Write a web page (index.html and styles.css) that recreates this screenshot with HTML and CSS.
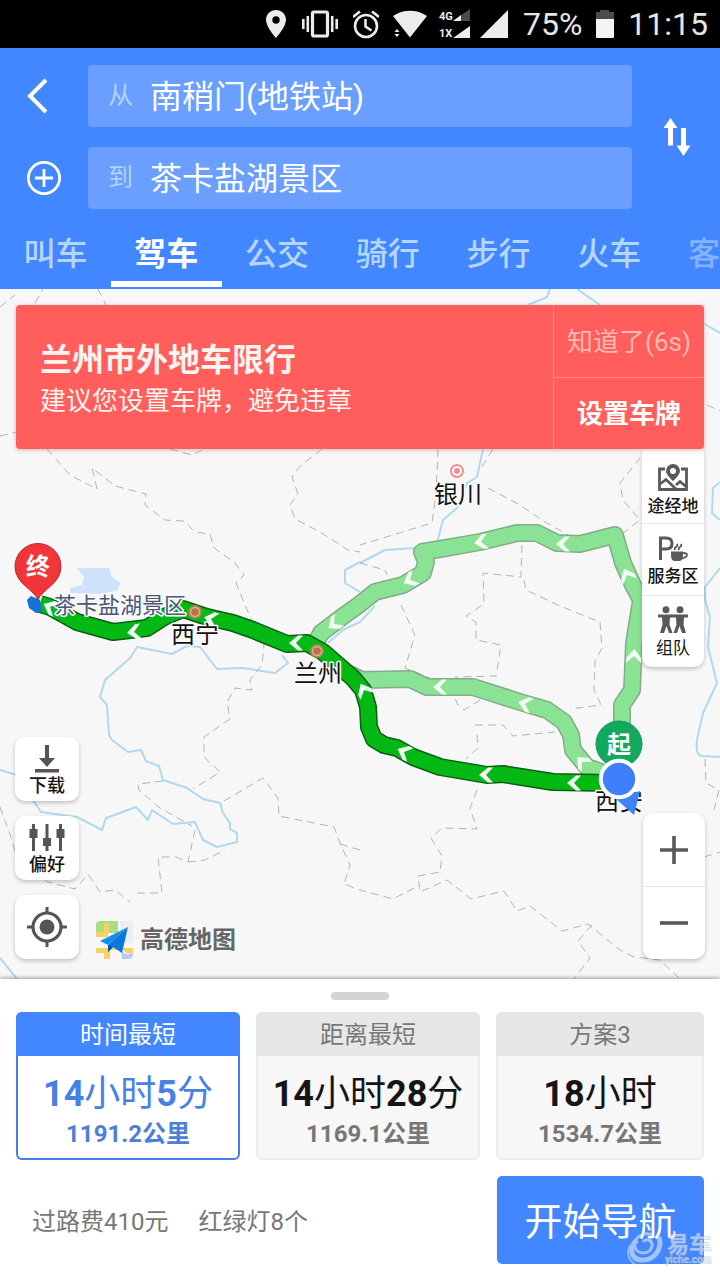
FILE: index.html
```html
<!DOCTYPE html>
<html lang="zh-CN">
<head>
<meta charset="utf-8">
<meta name="viewport" content="width=device-width, initial-scale=1">
<title>高德地图 - 驾车路线</title>
<link rel="stylesheet" href="styles.css">
</head>
<body>
<div class="status">
  <svg width="22" height="30" viewBox="0 0 22 30" fill="#ececec"><path fill-rule="evenodd" d="M11 1C5.500 1 1 5.300 1 10.800C1 18 11 29 11 29S21 18 21 10.800C21 5.300 16.500 1 11 1ZM11 7.300a3.700 3.700 0 1 1 0 7.400a3.700 3.700 0 1 1 0-7.400Z"/></svg>
  <svg width="38" height="30" viewBox="0 0 38 30" fill="none" stroke="#ececec"><rect x="11.500" y="3" width="15" height="24" rx="1.500" stroke-width="3.200"/><path stroke-width="2.600" d="M6.800 7v16M31.200 7v16M2.300 10v10M35.700 10v10"/></svg>
  <svg width="26" height="30" viewBox="0 0 26 30" fill="none" stroke="#ececec" stroke-width="2.600"><circle cx="13" cy="17" r="11"/><path d="M12.500 10v7.500l6 4M0 8l7-5.500M26 8l-7-5.500"/></svg>
  <svg class="wifi" width="32" height="30" viewBox="0 0 32 30" fill="#ececec"><path d="M0 7C10 0 24 0 34 7L17 28.500Z"/><path d="M4 20l2.500 3h-5zM4 28l2.500-3h-5z"/></svg>
  <svg class="signal" width="70" height="30" viewBox="0 0 70 30" fill="#ececec"><text x="0" y="11">4G</text><text x="0" y="28">1X</text><path fill="#4b4b4b" d="M31 0v12H14z"/><path d="M22 6v6h-8zM31 17v12H14zM69 1v28H41z"/></svg>
  <span>75%</span>
  <svg width="18" height="30" viewBox="0 0 18 30"><path fill="#4b4b4b" d="M4 1h9v2h5v8H0V3h4z"/><path fill="#f4f4f4" d="M0 10h18v18q0 1-1 1H1q-1 0-1-1z"/></svg>
  <span>11:15</span>
</div>

<header class="header">
  <form class="search">
    <button class="icon-btn" type="button" aria-label="返回"><svg width="34" height="38" viewBox="0 0 34 38" fill="none" stroke="#fff" stroke-width="4"><path d="M20 3L4 19l16 16"/></svg></button>
    <div class="field"><label for="from">从</label><input id="from" type="text" value="南稍门(地铁站)"></div>
    <button class="swap" type="button" aria-label="交换起终点"><svg width="28" height="38" viewBox="0 0 28 38" fill="#fff"><path d="M7.500 0L14.500 10H10v17.500H5V10H.5zM18 10h5v17.500h4.500L20.500 38L13.500 27.500H18z"/></svg></button>
    <button class="icon-btn" type="button" aria-label="添加途经点"><svg width="36" height="36" viewBox="0 0 36 36" fill="none" stroke="#fff" stroke-width="2.800"><circle cx="18" cy="18" r="15.600"/><path d="M18 9v18M9 18h18"/></svg></button>
    <div class="field"><label for="to">到</label><input id="to" type="text" value="茶卡盐湖景区"></div>
  </form>
  <nav class="tabs">
    <a href="#call">叫车</a><a href="#drive" class="active" aria-current="page">驾车</a><a href="#bus">公交</a><a href="#ride">骑行</a><a href="#walk">步行</a><a href="#train">火车</a><a href="#coach" class="faded">客车</a>
  </nav>
</header>

<main class="map">
  <svg class="canvas" viewBox="0 289 720 690" preserveAspectRatio="xMidYMid slice">
    <defs>
      <path id="chev" d="M7 -7.500L2 -7.500L-7 0L2 7.500L7 7.500L0 0Z"/>
      <g id="city"><circle r="7" fill="#a98552"/><circle r="5.200" fill="#d9b488"/><circle r="3.800" fill="#b5744c"/></g>
    </defs>
    <path class="lake" d="M77 568H109L112 577L120 582L118 590L100 594L70 593V588L82 585L84 577Z"/>
    <g class="river">
      <path d="M360 562L345 570V583L360 592M375 606L360 622L343 630L328 643M282 655L288 663L275 673L243 668L217 669L200 647L187 646L172 654L137 647L130 658L105 680L100 697L107 705L109 735L112 740L128 752L141 750L146 761L159 766L163 780L187 788L203 799L220 803L223 813L230 823V829L237 833V842L217 847L203 840L195 822L173 824L152 810L148 820L136 807L106 818L102 830L77 817L41 812L33 800L30 779L0 770"/>
      <path d="M0 958L17 979M720 568L705 587V600L710 617L708 647L717 683L703 713L697 740Q695 755 702 756L720 757M720 482L713 488L712 513L720 520M528 305L547 297L550 289M577 289L600 305M703 323L720 333M483 449L477 477L467 483L457 508L443 520L437 543L415 548L385 550L360 563"/>
    </g>
    <g class="border">
      <path d="M0 307L15 295M35 303L43 289M98 289L106 305M0 436L17 432M47 449L70 475L97 489L92 468L115 486L146 494L145 505L165 520L184 521L195 532L210 534L214 548L235 563L244 575L236 583L248 612L264 645L262 665L250 680L252 690L235 688L227 702L230 719L204 737V757L220 772L193 789"/>
      <path d="M322 449L300 466L292 477L298 494L290 505L295 519L320 532L348 550L360 552M170 449L192 455L202 450M438 449L436 495L432 523L360 545M493 449L480 470M488 488L520 505L545 522L568 535M622 534L640 520L623 500L620 483L640 458M522 545L521 577L483 573L484 604L466 616L476 622V640L501 645L496 676L455 677M524 580L526 590L560 606L600 622L602 648L595 661L594 690L601 705L570 709M401 605L415 635L405 668L430 678M450 687L458 705L464 710L480 700M475 725H503L513 736L555 732M477 735L478 748L466 759M477 790L470 808L477 829L442 828L431 838L442 856L440 872L418 876L420 892L447 880L471 899L504 891L517 911L530 906L562 931L588 924L620 950L634 957L660 960L680 979"/>
      <path d="M360 563L385 570L387 575M0 807L10 834L17 858L24 870L48 882L75 889L88 874L100 892L115 890L130 902M137 893H162L158 857H176L188 862L195 830M188 862L205 860L225 850M224 801L263 778L278 798L279 816L334 827L340 843L350 865L344 884L360 890L393 899L420 885M340 844L360 850M592 925L578 941L590 958L574 979M705 759L706 783L719 790L714 810M704 857L720 852M707 405L720 411M163 781L138 784L139 790L160 808L192 826"/>
    </g>
    <g class="route alt">
      <path d="M313 648L321 633L342 617L360 604L375 592L403 585L423 573L426 562L422 552L440 549L480 542L517 533L537 533L557 543L580 544L615 535L623 563L633 585L641 600L634 643L633 667L632 690L622 705V740"/>
      <path d="M345 672L362 680L410 679L427 687L473 687L520 702L547 710L564 722L571 735L573 750L587 767L610 775"/>
    </g>
    <g class="route alt core">
      <path d="M313 648L321 633L342 617L360 604L375 592L403 585L423 573L426 562L422 552L440 549L480 542L517 533L537 533L557 543L580 544L615 535L623 563L633 585L641 600L634 643L633 667L632 690L622 705V740"/>
      <path d="M345 672L362 680L410 679L427 687L473 687L520 702L547 710L564 722L571 735L573 750L587 767L610 775"/>
    </g>
    <path class="route main" d="M40 604L50 607L77 622L113 632L147 628L164 617L183 609L207 617L233 623L253 630L287 644L307 643L323 652L353 678L363 690L368 707L369 727L374 739L384 745L397 748L413 757L440 767L487 775L503 774L553 782L612 783"/>
    <path class="route main core" d="M40 604L50 607L77 622L113 632L147 628L164 617L183 609L207 617L233 623L253 630L287 644L307 643L323 652L353 678L363 690L368 707L369 727L374 739L384 745L397 748L413 757L440 767L487 775L503 774L553 782L612 783"/>
    <path fill="#1673d6" d="M27 600L31 596L40 600L42 612L36 613L29 608Z"/>
    <g fill="#f3fff3">
      <use href="#chev" transform="translate(50 607) rotate(25)"/><use href="#chev" transform="translate(134 632) rotate(-8)"/><use href="#chev" transform="translate(211 619) rotate(14)"/><use href="#chev" transform="translate(296 643)"/><use href="#chev" transform="translate(334 624) rotate(-38)"/>
      <use href="#chev" transform="translate(410 580) rotate(-28)"/><use href="#chev" transform="translate(481 542) rotate(-10)"/><use href="#chev" transform="translate(563 544)"/><use href="#chev" transform="translate(627 575) rotate(65)"/><use href="#chev" transform="translate(634 656) rotate(92)"/>
      <use href="#chev" transform="translate(440 687)"/><use href="#chev" transform="translate(525 704) rotate(16)"/><use href="#chev" transform="translate(364 690) rotate(62)"/><use href="#chev" transform="translate(582 762) rotate(45)"/><use href="#chev" transform="translate(404 752) rotate(25)"/><use href="#chev" transform="translate(486 775)"/><use href="#chev" transform="translate(574 783)"/>
    </g>
    <use href="#city" x="195" y="612"/><use href="#city" x="317" y="651"/>
    <circle cx="457" cy="471" r="6" fill="#fff" stroke="#ee8f91" stroke-width="2"/><circle cx="457" cy="471" r="3" fill="#ee8f91"/>
    <g class="names">
      <text x="458" y="503">银川</text><text x="195" y="643">西宁</text><text x="318" y="682">兰州</text><text x="619" y="810">西安</text>
      <text class="poi" x="120" y="613">茶卡盐湖景区</text>
    </g>
    <path fill="#f33438" stroke="#a92c32" d="M38 600C35 590 15 584 15 566.500A23 23 0 0 1 61 566.500C61 584 41 590 38 600Z"/>
    <text class="pin" x="38" y="575">终</text>
    <circle cx="619" cy="744" r="23" fill="#12a860" stroke="#0c9b58"/>
    <text class="pin" x="619" y="753">起</text>
    <path fill="#3f83fb" d="M615 798L640 791L634 815Z"/>
    <circle cx="619" cy="779" r="18.200" fill="#3f7ffb" stroke="#fff" stroke-width="4"/>
  </svg>

  <section class="banner">
    <div class="banner-text"><h2>兰州市外地车限行</h2><p>建议您设置车牌，避免违章</p></div>
    <div class="banner-actions"><button type="button">知道了(6s)</button><button class="strong" type="button">设置车牌</button></div>
  </section>

  <div class="panel tools">
    <button type="button"><svg width="30" height="28" viewBox="0 0 30 28" fill="none" stroke="#595959" stroke-width="2.800"><path d="M7 5H1.500v20.500h27V5H23M2 20l6-4.500L18 25M18 21l4-3.500 6 5"/><path fill="#595959" fill-rule="evenodd" stroke="none" d="M15 0a7 7 0 0 1 7 7c0 4-7 10-7 10S8 11 8 7a7 7 0 0 1 7-7Zm0 4a3 3 0 1 0 0 6a3 3 0 1 0 0-6Z"/></svg>途经地</button>
    <button type="button"><svg width="30" height="28" viewBox="0 0 30 28" fill="none" stroke="#595959" stroke-width="3"><path d="M2.500 26V4H8q6 0 6 5.500T8 15H3"/><path fill="#595959" stroke="none" d="M13 17.500H25V21q0 6-4 6h-4q-4 0-4-6z"/><path stroke-width="1.800" d="M25 19q4 0 4 2t-5 3.500M17 16q-1-2 1-3t1-3M21 16q-1-2 1-3t1-3"/></svg>服务区</button>
    <button type="button"><svg width="32" height="28" viewBox="0 0 32 28" fill="#595959"><circle cx="9" cy="3.700" r="3.500"/><circle cx="23" cy="3.700" r="3.500"/><path d="M1 8.500h30v3h-4l-.5 7L29 27h-4l-2.500-7L20 27h-3.500l3-8.500-.5-7h-6l-.5 7 3 8.500H12l-2.500-7L7 27H3l2.500-8.500-.5-7H1z"/></svg>组队</button>
  </div>

  <div class="left">
    <button class="panel" type="button"><svg width="28" height="30" viewBox="0 0 28 30" fill="#555"><path d="M12 1h4v13h6l-8 9-8-9h6zM2 25h24v3.500H2z"/></svg>下载</button>
    <button class="panel" type="button"><svg width="38" height="30" viewBox="0 0 38 30" fill="#555"><path d="M4 1h3v5h2.500v9H7v13H4V15H1.500V6H4zM17.500 1h3v14H23v8h-2.500v5h-3v-5H15v-8h2.500zM31 1h3v5h2.500v9H34v13h-3V15h-2.500V6H31z"/></svg>偏好</button>
    <button class="panel locate" type="button" aria-label="定位"><svg width="40" height="40" viewBox="0 0 40 40" fill="none" stroke="#555"><circle cx="20" cy="20" r="14" stroke-width="3.200"/><circle cx="20" cy="20" r="7.500" fill="#555" stroke="none"/><path stroke-width="3" d="M20 0v7M20 33v7M0 20h7M33 20h7"/></svg></button>
  </div>

  <div class="brand">
    <svg width="38" height="38" viewBox="0 0 38 38"><path fill="#a8df82" d="M4 0h18v12H0V4q0-4 4-4z"/><path fill="#eceff1" d="M24 0h9q4 0 4 4v18H24z"/><path fill="#f8d064" d="M8 2h5v10H8zM0 11h12v5H0zM0 27h37v6q-7 0-10-4H14v9H8v-6H0z"/><path fill="#b6caf2" d="M26 31q6 4 11 1 0 6-4 6h-7z"/><path fill="#168cf0" d="M32 6L4 20l8 4z"/><path fill="#0878dd" d="M32 6L12 24v7l5-5 9 6z"/><path fill="#075ca9" d="M12 24v7l5-5z"/></svg>
    <span>高德地图</span>
  </div>

  <div class="panel zoom">
    <button type="button" aria-label="放大"><svg width="28" height="28" viewBox="0 0 28 28" stroke="#595959" stroke-width="3.600"><path d="M14 0v28M0 14h28"/></svg></button>
    <button type="button" aria-label="缩小"><svg width="28" height="28" viewBox="0 0 28 28" stroke="#595959" stroke-width="3.600"><path d="M0 14h28"/></svg></button>
  </div>
</main>

<section class="sheet">
  <div class="handle"></div>
  <div class="plans">
    <button class="plan selected" type="button" aria-pressed="true"><span class="plan-name">时间最短</span><span class="time"><b>14</b>小时<b>5</b>分</span><span class="dist">1191.2公里</span></button>
    <button class="plan" type="button"><span class="plan-name">距离最短</span><span class="time"><b>14</b>小时<b>28</b>分</span><span class="dist">1169.1公里</span></button>
    <button class="plan" type="button"><span class="plan-name">方案3</span><span class="time"><b>18</b>小时</span><span class="dist">1534.7公里</span></button>
  </div>
  <div class="footer">
    <p class="facts"><span>过路费410元</span><span>红绿灯8个</span></p>
    <button class="go" type="button">开始导航</button>
  </div>
  <svg class="watermark" width="90" height="36" viewBox="0 0 90 36"><g fill="none" stroke="#e4eaf2"><path stroke-width="5" d="M33 5C37 18 27 29 15 28C4 27 3 15 11 8"/><path stroke-width="3" d="M26 3C17-1 7 6 9 15C11 23 24 23 26 14C27 8 20 6 17 10"/><path stroke-width="1.500" d="M4 13Q-2 26 10 33"/></g><text class="wm-cn" x="41" y="20">易车</text><text class="wm-en" x="39" y="31">yiche.com</text></svg>
</section>
</body>
</html>
```
FILE: styles.css
```css
* { box-sizing: border-box; }
body {
  margin: 0;
  min-height: 100vh;
  display: flex;
  flex-direction: column;
  background: #fff;
  color: #151515;
  font-family: Roboto, "Noto Sans CJK SC", sans-serif;
}
button, input { font: inherit; color: inherit; }
button { border: 0; padding: 0; background: none; cursor: pointer; }
svg { display: block; flex: none; }
h2, p { margin: 0; }

.status {
  height: 48px;
  display: flex;
  align-items: center;
  justify-content: flex-end;
  gap: 14px;
  padding-right: 12px;
  background: #000;
  color: #e6e6e6;
  font-size: 32px;
  line-height: 50px;
}
.wifi, .signal { overflow: visible; }
.signal { font-size: 11px; line-height: 12px; font-weight: 700; }

.header { background: #4287ff; color: #fff; overflow: hidden; }
.search {
  display: grid;
  grid-template-columns: 88px 1fr 88px;
  grid-template-rows: 62px 62px;
  row-gap: 20px;
  padding-top: 17px;
}
.icon-btn { display: flex; align-items: center; padding-left: 26px; }
.swap { grid-column: 3; grid-row: 1 / 3; display: flex; align-items: center; justify-content: center; padding-left: 2px; }
.field {
  grid-column: 2;
  display: flex;
  align-items: center;
  gap: 17px;
  padding: 2px 20px 0;
  border-radius: 4px;
  background: #6a9fff;
}
.field label { font-size: 25px; line-height: 36px; padding-bottom: 2px; color: #b5d1ff; }
.field input {
  flex: 1;
  min-width: 0;
  padding: 0;
  border: 0;
  outline: 0;
  background: none;
  font-size: 32px;
  line-height: 48px;
}
.tabs { display: flex; height: 80px; }
.tabs a {
  flex: 0 0 calc(100% / 6.5);
  height: 78px;
  padding-top: 21px;
  text-align: center;
  text-decoration: none;
  white-space: nowrap;
  font-size: 32px;
  line-height: 48px;
  font-weight: 500;
  color: #b5d6ff;
}
.tabs .active { color: #fff; font-weight: 700; border-bottom: 6px solid #fff; }
.tabs .faded { color: #84b2ff; }

.map { position: relative; flex: 1; min-height: 690px; padding: 16px; overflow: hidden; background: #f7f7f7; }
.canvas { position: absolute; inset: 0; width: 100%; height: 100%; }
.lake { fill: #cfe2fb; }
.river { fill: none; stroke: #aed9ef; stroke-width: 2; stroke-linejoin: round; }
.border { fill: none; stroke: #b4b4b8; stroke-width: 1; stroke-dasharray: 8 5; }
.route { fill: none; stroke-width: 18; stroke-linejoin: round; }
.route.core { stroke-width: 15; }
.alt { stroke: #83ab87; }
.alt.core { stroke: #8ae394; }
.main { stroke: #075f12; }
.main.core { stroke: #04b914; }
.names {
  font-size: 24px;
  text-anchor: middle;
  fill: #111;
  stroke: #fafafa;
  stroke-width: 3;
  stroke-linejoin: round;
  paint-order: stroke;
}
.names .poi { font-size: 22px; fill: #4c5876; }
.pin { font-size: 24px; font-weight: 700; text-anchor: middle; fill: #fff; }

.banner {
  position: relative;
  z-index: 2;
  display: flex;
  height: 144px;
  border-radius: 4px;
  background: #ff5e5d;
  color: #fff4ef;
  box-shadow: 0 1px 4px #b7777788;
}
.banner-text { flex: 1; padding: 35px 24px 0; }
.banner h2 { font-size: 32px; line-height: 40px; font-weight: 700; }
.banner p { font-size: 26px; line-height: 42px; }
.banner-actions { width: 151px; display: grid; grid-template-rows: 1fr 1fr; border-left: 1px solid #ff8b88; }
.banner-actions button { padding-bottom: 4px; font-size: 26px; color: #ffb9b3; }
.banner-actions .strong { color: #fff; font-weight: 700; border-top: 1px solid #ff8b88; }

.panel { background: #fff; border-radius: 10px; box-shadow: 0 2px 4px #00000038; }
.tools { position: absolute; top: 154px; right: 16px; width: 62px; display: grid; }
.tools button {
  height: 72px;
  display: flex;
  flex-direction: column;
  align-items: center;
  justify-content: center;
  gap: 2px;
  padding-top: 2px;
  font-size: 17px;
  line-height: 24px;
  font-weight: 500;
}
.tools button:first-child { height: 80px; padding-top: 16px; }
.tools button:last-child { font-weight: 400; }
.tools button + button, .zoom button + button { border-top: 1px solid #e8e8e8; }
.left { position: absolute; left: 15px; bottom: 20px; display: grid; gap: 15px; }
.left button {
  width: 64px;
  height: 64px;
  display: flex;
  flex-direction: column;
  align-items: center;
  justify-content: center;
  padding-top: 4px;
  font-size: 18px;
  line-height: 24px;
  font-weight: 500;
}
.left .locate { padding-top: 0; }
.brand {
  position: absolute;
  left: 96px;
  bottom: 20px;
  display: flex;
  align-items: center;
  gap: 6px;
  color: #666;
  font-size: 24px;
  line-height: 36px;
  font-weight: 700;
}
.zoom { position: absolute; right: 15px; bottom: 20px; width: 62px; display: grid; }
.zoom button { height: 73px; display: flex; align-items: center; justify-content: center; }

.sheet { position: relative; padding: 13px 16px 16px; background: #fff; box-shadow: 0 -1px 4px #00000060; }
.handle { width: 58px; height: 8px; margin: 0 auto 12px; border-radius: 4px; background: #d4d4d4; }
.plans { display: grid; grid-template-columns: 14fr 14fr 13fr; gap: 16px; }
.plan {
  display: flex;
  flex-direction: column;
  align-items: center;
  height: 148px;
  overflow: hidden;
  border-radius: 6px;
  background: #f7f7f7;
  box-shadow: inset 0 0 0 2px #ebebeb;
}
.plan-name { width: 100%; padding-top: 2px; background: #e7e7e7; color: #777; font-size: 24px; line-height: 42px; }
.time { margin-top: 16px; font-size: 36px; line-height: 44px; white-space: nowrap; }
.dist { font-size: 24px; line-height: 36px; font-weight: 700; color: #777; }
.selected { background: #fff; color: #4681e8; box-shadow: inset 0 0 0 2px #437fe5; }
.selected .plan-name { background: #4287ff; color: #fff; }
.selected .dist { color: #4b7fda; }
.footer { display: flex; align-items: center; justify-content: space-between; margin-top: 16px; }
.facts { display: flex; gap: 30px; padding: 3px 0 0 16px; font-size: 24px; line-height: 36px; color: #777; }
.go { width: 207px; height: 88px; padding-bottom: 4px; border-radius: 5px; background: #4287ff; color: #fff; font-size: 38px; }
.watermark { position: absolute; right: 4px; bottom: 12px; opacity: 0.6; }
.watermark text { fill: #e9edf3; stroke: #8e9fb8; stroke-width: 1; paint-order: stroke; }
.wm-cn { font-size: 22px; font-weight: 700; }
.wm-en { font-size: 10px; font-weight: 700; }
```
